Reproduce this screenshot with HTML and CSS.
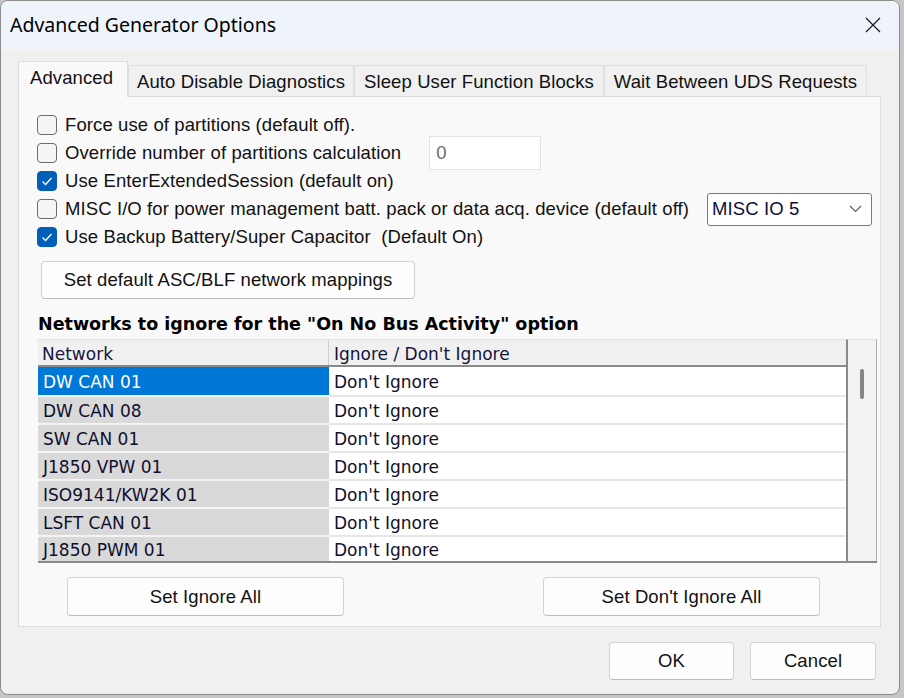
FILE: index.html
```html
<!DOCTYPE html>
<html>
<head>
<meta charset="utf-8">
<link rel="stylesheet" href="styles.css">
</head>
<body>
<div class="window">
  <div class="titlebar">
    <span class="title">Advanced Generator Options</span>
    <span class="close"><svg width="16" height="16" viewBox="0 0 16 16"><path d="M1 1 L15 15 M15 1 L1 15" stroke="#1a1a1a" stroke-width="1.2" fill="none"/></svg></span>
  </div>
  <div class="content">
    <div class="tabs">
      <div class="tab active w1">Advanced</div>
      <div class="tab w2">Auto Disable Diagnostics</div>
      <div class="tab w3">Sleep User Function Blocks</div>
      <div class="tab w4">Wait Between UDS Requests</div>
    </div>
    <div class="panel">
      <div class="opt"><span class="cb"></span><span>Force use of partitions (default off).</span></div>
      <div class="opt"><span class="cb"></span><span>Override number of partitions calculation</span><span class="numbox">0</span></div>
      <div class="opt"><span class="cb on"><svg width="18" height="18" viewBox="0 0 18 18"><path d="M4.5 9.5 L7.5 12.5 L13.5 6" stroke="#fff" stroke-width="1.4" fill="none"/></svg></span><span>Use EnterExtendedSession (default on)</span></div>
      <div class="opt"><span class="cb"></span><span>MISC I/O for power management batt. pack or data acq. device (default off)</span><span class="combo"><span class="combo-text">MISC IO 5</span><svg width="13" height="8" viewBox="0 0 13 8"><path d="M1 1 L6.5 6.5 L12 1" stroke="#606060" stroke-width="1.2" fill="none"/></svg></span></div>
      <div class="opt"><span class="cb on"><svg width="18" height="18" viewBox="0 0 18 18"><path d="M4.5 9.5 L7.5 12.5 L13.5 6" stroke="#fff" stroke-width="1.4" fill="none"/></svg></span><span>Use Backup Battery/Super Capacitor&nbsp; (Default On)</span></div>
      <button class="btn mapbtn">Set default ASC/BLF network mappings</button>
      <div class="heading">Networks to ignore for the "On No Bus Activity" option</div>
      <div class="grid">
        <div class="grid-main">
          <div class="row head"><div class="c1">Network</div><div class="c2">Ignore / Don't Ignore</div></div>
          <div class="row first"><div class="c1 sel">DW CAN 01</div><div class="c2">Don't Ignore</div></div>
          <div class="row"><div class="c1">DW CAN 08</div><div class="c2">Don't Ignore</div></div>
          <div class="row"><div class="c1">SW CAN 01</div><div class="c2">Don't Ignore</div></div>
          <div class="row"><div class="c1">J1850 VPW 01</div><div class="c2">Don't Ignore</div></div>
          <div class="row"><div class="c1">ISO9141/KW2K 01</div><div class="c2">Don't Ignore</div></div>
          <div class="row"><div class="c1">LSFT CAN 01</div><div class="c2">Don't Ignore</div></div>
          <div class="row last"><div class="c1">J1850 PWM 01</div><div class="c2">Don't Ignore</div></div>
        </div>
        <div class="vscroll"><div class="thumb"></div></div>
      </div>
      <div class="gridbtns">
        <button class="btn gbtn">Set Ignore All</button>
        <button class="btn gbtn">Set Don't Ignore All</button>
      </div>
    </div>
    <div class="footer">
      <button class="btn fbtn">OK</button>
      <button class="btn fbtn">Cancel</button>
    </div>
  </div>
</div>
</body>
</html>
```
FILE: styles.css
```css
html, body {
  margin: 0;
  padding: 0;
}
body {
  width: 904px;
  height: 698px;
  overflow: hidden;
  background: #c6c6c6;
  font-family: "Liberation Sans", Arial, sans-serif;
  font-size: 18.5px;
  letter-spacing: 0.1px;
  color: #111;
}
.window {
  width: 900px;
  height: 695px;
  box-sizing: border-box;
  border: 1px solid #8c8c8c;
  border-radius: 8px;
  background: #f0f0f0;
  overflow: hidden;
  display: flex;
  flex-direction: column;
}
.titlebar {
  height: 49px;
  flex: none;
  background: #eef4f9;
  display: flex;
  align-items: center;
  padding-left: 9px;
  padding-bottom: 2px;
  box-sizing: border-box;
}
.title {
  flex: 1;
  font-family: "Noto Sans", "Open Sans", sans-serif;
  font-size: 19.5px;
  letter-spacing: 0;
  color: #000;
}
.close {
  width: 16px;
  height: 16px;
  margin-right: 18px;
  display: flex;
}
.content {
  padding-top: 11px;
  padding-left: 17px;
  flex: 1;
}
.tabs {
  display: flex;
  align-items: flex-end;
  height: 35px;
}
.tab {
  height: 31px;
  box-sizing: border-box;
  border: 1px solid #dedede;
  border-bottom: none;
  background: #f0f0f0;
  display: flex;
  align-items: center;
  justify-content: center;
  color: #111;
  padding-top: 1px;
  white-space: nowrap;
}
.tab.active {
  height: 36px;
  background: #f9f9f9;
  margin-bottom: -1px;
  position: relative;
  z-index: 1;
  padding-top: 0;
  padding-bottom: 3px;
  padding-right: 3px;
}
.w1 { width: 110px; }
.w2 { width: 226px; }
.w3 { width: 250px; }
.w4 { width: 263px; }
.panel {
  width: 863px;
  box-sizing: border-box;
  border: 1px solid #dcdcdc;
  background: #f9f9f9;
  padding: 14px 0 10px 18px;
}
.opt {
  height: 28px;
  display: flex;
  align-items: center;
  white-space: nowrap;
}
.cb {
  width: 20px;
  height: 20px;
  box-sizing: border-box;
  border: 1px solid #6b6b6b;
  border-radius: 4px;
  background: #f5f5f5;
  margin-right: 8px;
  flex: none;
  display: flex;
  align-items: center;
  justify-content: center;
}
.cb.on {
  background: #005fb8;
  border-color: #005fb8;
}
.numbox {
  margin-left: 28px;
  width: 112px;
  height: 34px;
  box-sizing: border-box;
  border: 1px solid #e3e3e3;
  background: #fff;
  color: #6d6d6d;
  display: flex;
  align-items: center;
  padding-left: 6px;
  flex: none;
}
.combo {
  margin-left: 18px;
  width: 165px;
  height: 33px;
  box-sizing: border-box;
  border: 1px solid #7a7a7a;
  border-radius: 3px;
  background: #fff;
  display: flex;
  align-items: center;
  justify-content: space-between;
  padding: 0 9px 0 4px;
  flex: none;
}
.combo-text {
  color: #0c0c3a;
}
.btn {
  background: #fdfdfd;
  border: 1px solid #d3d3d3;
  border-bottom-color: #bdbdbd;
  border-radius: 4px;
  font: inherit;
  letter-spacing: inherit;
  color: #111;
  display: flex;
  align-items: center;
  justify-content: center;
  box-sizing: border-box;
  padding: 0;
}
.mapbtn {
  margin: 10px 0 0 4px;
  width: 374px;
  height: 38px;
}
.heading {
  margin: 14px 0 0 1px;
  height: 22px;
  line-height: 22px;
  font-family: "DejaVu Sans", sans-serif;
  font-weight: bold;
  font-size: 17.5px;
  letter-spacing: 0;
  color: #000;
  white-space: nowrap;
}
.grid {
  margin: 4px 0 0 1px;
  width: 839px;
  height: 224px;
  box-sizing: border-box;
  display: flex;
  border-bottom: 2px solid #8a8a8a;
  font-family: "DejaVu Sans", sans-serif;
  font-size: 17px;
  letter-spacing: 0;
  color: #10102e;
}
.grid-main {
  width: 808px;
  display: flex;
  flex-direction: column;
}
.row {
  display: flex;
  height: 28px;
  flex: none;
}
.row .c1 {
  width: 291px;
  box-sizing: border-box;
  background: #d9d9d9;
  border-top: 2px solid #f4f4f4;
  padding-left: 5px;
  padding-top: 2px;
  display: flex;
  align-items: center;
  white-space: nowrap;
}
.row .c2 {
  flex: 1;
  box-sizing: border-box;
  background: #fff;
  border-top: 2px solid #e6e6e6;
  padding-left: 5px;
  padding-top: 2px;
  display: flex;
  align-items: center;
}
.row.first .c1, .row.first .c2 {
  border-top: none;
}
.row.last {
  height: 26px;
}
.row .c1.sel {
  background: #0078d7;
  color: #fff;
}
.row.head {
  border-top: 1px solid #e2e2e2;
  border-bottom: 2px solid #8a8a8a;
  box-sizing: border-box;
  background: #f0f0f0;
  color: #14143c;
}
.row.head .c1 {
  background: #f0f0f0;
  border-top: none;
  border-right: 1px solid #cfcfcf;
  padding-left: 4px;
}
.row.head .c2 {
  background: #f0f0f0;
  border-top: none;
  padding-left: 5px;
}
.vscroll {
  width: 31px;
  box-sizing: border-box;
  border-left: 2px solid #8a8a8a;
  border-right: 1px solid #ababab;
  border-top: 1px solid #e2e2e2;
  background: #f3f3f3;
  display: flex;
  justify-content: center;
  padding-top: 29px;
}
.thumb {
  width: 4px;
  height: 30px;
  border-radius: 2px;
  background: #858585;
}
.gridbtns {
  display: flex;
  gap: 199px;
  margin: 14px 0 0 30px;
}
.gbtn {
  width: 277px;
  height: 39px;
}
.footer {
  display: flex;
  justify-content: flex-end;
  gap: 16px;
  padding: 15px 23px 0 0;
}
.fbtn {
  width: 125px;
  height: 38px;
}
.fbtn + .fbtn {
  width: 126px;
}
```
